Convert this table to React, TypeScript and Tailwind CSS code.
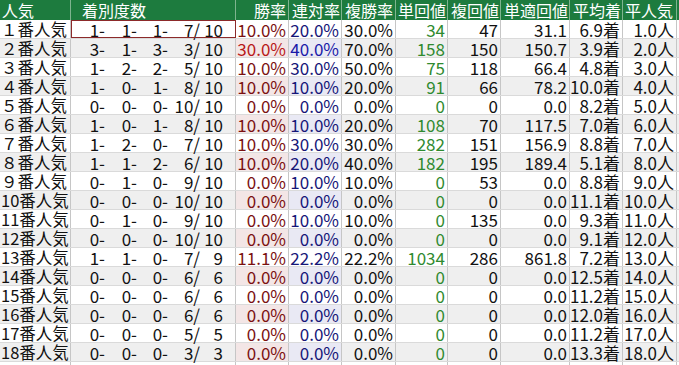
import React from "react";

type Row = {
  label: string;
  c: [string, string, string, string, string];
  win: string;
  ren: string;
  fuku: string;
  tan: string;
  fkv: string;
  tekio: string;
  avg: string;
  pop: string;
};

const raw: string[] = [
  "１番人気|1,1,1,7,10|10.0%|20.0%|30.0%|34|47|31.1|6.9着|1.0人",
  "２番人気|3,1,3,3,10|30.0%|40.0%|70.0%|158|150|150.7|3.9着|2.0人",
  "３番人気|1,2,2,5,10|10.0%|30.0%|50.0%|75|118|66.4|4.8着|3.0人",
  "４番人気|1,0,1,8,10|10.0%|10.0%|20.0%|91|66|78.2|10.0着|4.0人",
  "５番人気|0,0,0,10,10|0.0%|0.0%|0.0%|0|0|0.0|8.2着|5.0人",
  "６番人気|1,0,1,8,10|10.0%|10.0%|20.0%|108|70|117.5|7.0着|6.0人",
  "７番人気|1,2,0,7,10|10.0%|30.0%|30.0%|282|151|156.9|8.8着|7.0人",
  "８番人気|1,1,2,6,10|10.0%|20.0%|40.0%|182|195|189.4|5.1着|8.0人",
  "９番人気|0,1,0,9,10|0.0%|10.0%|10.0%|0|53|0.0|8.8着|9.0人",
  "10番人気|0,0,0,10,10|0.0%|0.0%|0.0%|0|0|0.0|11.1着|10.0人",
  "11番人気|0,1,0,9,10|0.0%|10.0%|10.0%|0|135|0.0|9.3着|11.0人",
  "12番人気|0,0,0,10,10|0.0%|0.0%|0.0%|0|0|0.0|9.1着|12.0人",
  "13番人気|1,1,0,7,9|11.1%|22.2%|22.2%|1034|286|861.8|7.2着|13.0人",
  "14番人気|0,0,0,6,6|0.0%|0.0%|0.0%|0|0|0.0|12.5着|14.0人",
  "15番人気|0,0,0,6,6|0.0%|0.0%|0.0%|0|0|0.0|11.2着|15.0人",
  "16番人気|0,0,0,6,6|0.0%|0.0%|0.0%|0|0|0.0|12.0着|16.0人",
  "17番人気|0,0,0,5,5|0.0%|0.0%|0.0%|0|0|0.0|11.2着|17.0人",
  "18番人気|0,0,0,3,3|0.0%|0.0%|0.0%|0|0|0.0|13.3着|18.0人",
];

const rows: Row[] = raw.map((s) => {
  const p = s.split("|");
  const c = p[1].split(",") as [string, string, string, string, string];
  return {
    label: p[0],
    c,
    win: p[2],
    ren: p[3],
    fuku: p[4],
    tan: p[5],
    fkv: p[6],
    tekio: p[7],
    avg: p[8],
    pop: p[9],
  };
});

const font = {
  fontFamily: '"Noto Sans CJK JP", "Noto Sans", sans-serif',
};

function Header() {
  const h = "h-full flex items-center border-r border-[#7fb48f] text-white whitespace-nowrap";
  return (
    <div className="flex h-[20px] bg-[#1d7b3e] leading-[20px] text-[16px]">
      <div className={`${h} w-[71px] pl-[2px]`}>人気</div>
      <div className={`${h} w-[165px] pl-[11px]`}>着別度数</div>
      <div className={`${h} w-[53px] justify-end pr-[2px]`}>勝率</div>
      <div className={`${h} w-[53px] justify-end pr-[1px]`}>連対率</div>
      <div className={`${h} w-[54px] justify-end pr-[2px]`}>複勝率</div>
      <div className={`${h} w-[52px] justify-end pr-[1px]`}>単回値</div>
      <div className={`${h} w-[53px] justify-end pr-[1px]`}>複回値</div>
      <div className={`${h} w-[69px] justify-end pr-[1px]`}>単適回値</div>
      <div className={`${h} w-[53px] justify-end pr-[1px]`}>平均着</div>
      <div className={`${h} w-[54px] justify-end pr-[3px]`}>平人気</div>
      <div className="flex-1" />
    </div>
  );
}

function DataRow({ r, i }: { r: Row; i: number }) {
  const gray = i % 2 === 1;
  const cell = "h-full flex items-center border-r border-[#c6c6c6] whitespace-nowrap";
  const num = `${cell} justify-end pr-[2px]`;
  const winColor = r.win === "30.0%" ? "text-[#b81818]" : "text-[#7a1010]";
  const renColor = r.ren === "40.0%" ? "text-[#1a1aa8]" : "text-[#161678]";
  return (
    <div
      className={`flex h-[19px] border-b border-[#dadada] leading-[19px] text-[17px] text-[#111] ${
        gray ? "bg-[#efefef]" : "bg-white"
      }`}
    >
      <div className={`${cell} w-[71px] pl-[1px] text-[16.5px]`}>{r.label}</div>
      <div
        className={`${cell} w-[165px] ${
          i === 0 ? "outline outline-1 outline-[#8c2a2a] -outline-offset-1" : ""
        }`}
      >
        <span className="w-[34px] text-right">{r.c[0]}-</span>
        <span className="w-[32px] text-right">{r.c[1]}-</span>
        <span className="w-[31px] text-right">{r.c[2]}-</span>
        <span className="w-[32px] text-right">{r.c[3]}/</span>
        <span className="w-[23px] text-right">{r.c[4]}</span>
      </div>
      <div className={`${num} w-[53px] ${winColor} ${gray ? "bg-[#f3e6e6]" : ""}`}>{r.win}</div>
      <div className={`${num} w-[53px] ${renColor} ${gray ? "bg-[#e9e9f4]" : ""}`}>{r.ren}</div>
      <div className={`${num} w-[54px]`}>{r.fuku}</div>
      <div className={`${num} w-[52px] text-[#2f8a2f]`}>{r.tan}</div>
      <div className={`${num} w-[53px]`}>{r.fkv}</div>
      <div className={`${num} w-[69px]`}>{r.tekio}</div>
      <div className={`${num} w-[53px] pr-[1px]`}>{r.avg}</div>
      <div className={`${num} w-[54px] pr-[1px]`}>{r.pop}</div>
      <div className="flex-1" />
    </div>
  );
}

export default function App() {
  return (
    <div className="w-[679px] h-[365px] bg-white overflow-hidden" style={font}>
      <Header />
      {rows.map((r, i) => (
        <DataRow key={i} r={r} i={i} />
      ))}
      <div className="flex h-[4px]">
        <div className="w-[71px] border-r border-[#c6c6c6]" />
        <div className="w-[165px] border-r border-[#c6c6c6]" />
        <div className="w-[53px] border-r border-[#c6c6c6]" />
        <div className="w-[53px] border-r border-[#c6c6c6]" />
        <div className="w-[54px] border-r border-[#c6c6c6]" />
        <div className="w-[52px] border-r border-[#c6c6c6]" />
        <div className="w-[53px] border-r border-[#c6c6c6]" />
        <div className="w-[69px] border-r border-[#c6c6c6]" />
        <div className="w-[53px] border-r border-[#c6c6c6]" />
        <div className="w-[54px] border-r border-[#c6c6c6]" />
      </div>
    </div>
  );
}
